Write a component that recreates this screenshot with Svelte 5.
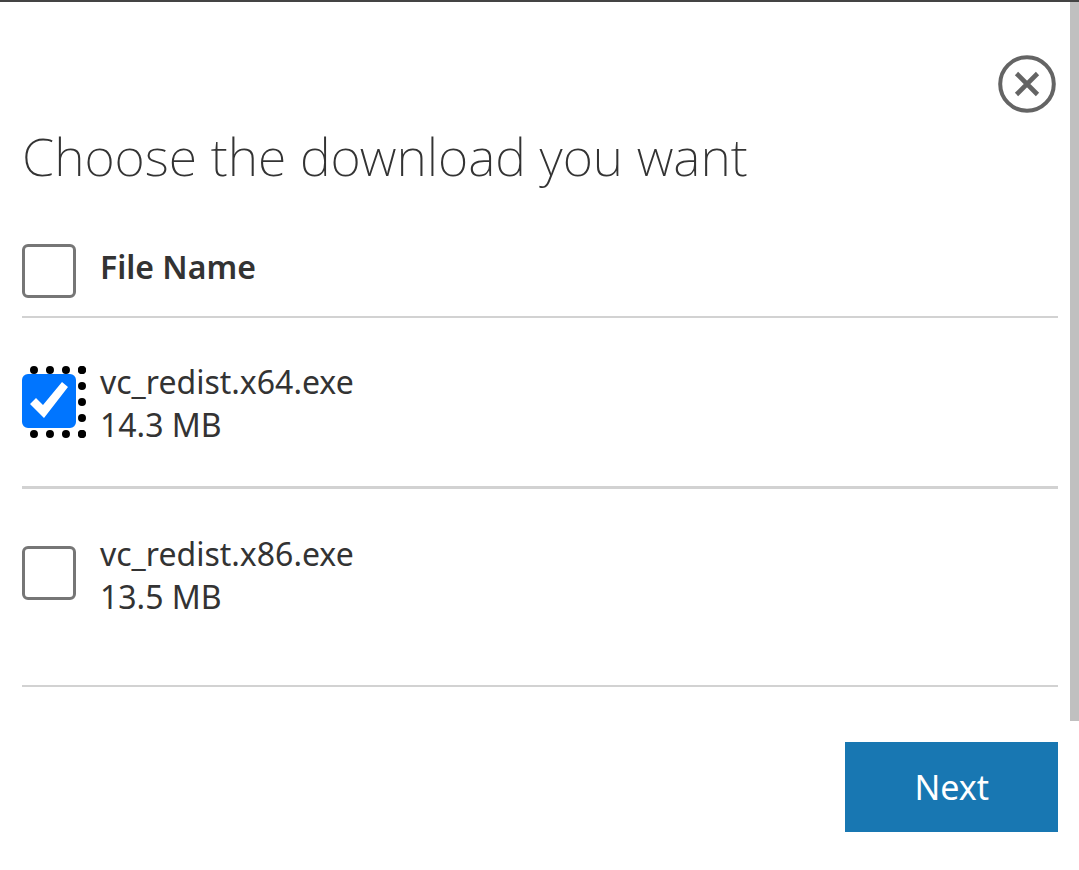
<script>
  let files = $state([
    { name: 'vc_redist.x64.exe', size: '14.3 MB', checked: true },
    { name: 'vc_redist.x86.exe', size: '13.5 MB', checked: false }
  ]);
  let focused = $state(0);
  let all = $derived(files.every((f) => f.checked));

  function toggleAll(e) {
    const checked = e.target.checked;
    files.forEach((f) => (f.checked = checked));
  }
</script>

<div class="dialog">
  <div class="scrollbar"></div>
  <div class="top">
    <button class="close" aria-label="Close">
      <svg viewBox="0 0 58 58" width="58" height="58" fill="none" stroke="#646464">
        <circle cx="29" cy="29" r="26.8" stroke-width="4" />
        <path d="M18.5 18.5 39.5 39.5M39.5 18.5 18.5 39.5" stroke-width="4.6" />
      </svg>
    </button>
  </div>
  <h1>Choose the download you want</h1>
  <table>
    <thead>
      <tr>
        <th class="pick">
          <span class="box"><input id="all" type="checkbox" checked={all} onchange={toggleAll} /></span>
        </th>
        <th class="name"><label for="all">File Name</label></th>
      </tr>
    </thead>
    <tbody>
      {#each files as file, i}
        <tr>
          <td class="pick">
            <span class="box" class:focused={focused === i}>
              <input id="file{i}" type="checkbox" bind:checked={file.checked} onfocus={() => (focused = i)} />
            </span>
          </td>
          <td>
            <label for="file{i}">{file.name}<br />{file.size}</label>
          </td>
        </tr>
      {/each}
    </tbody>
  </table>
  <div class="actions">
    <button class="next">Next</button>
  </div>
</div>

<style>
  :global(body) {
    margin: 0;
    background: #fff;
  }

  .dialog {
    position: relative;
    box-sizing: border-box;
    padding: 53px 21px 38px 22px;
    border-top: 2px solid #444;
    font-family: "Noto Sans", sans-serif;
    font-size: 32px;
    line-height: 43px;
    color: #333;
  }

  .scrollbar {
    position: absolute;
    top: 0;
    right: 0;
    width: 9px;
    height: 719px;
    background: #c0c0c0;
  }

  .top {
    display: flex;
    justify-content: flex-end;
    padding-right: 2px;
  }

  .close {
    display: block;
    padding: 0;
    border: 0;
    background: none;
    cursor: pointer;
  }

  .close svg {
    display: block;
  }

  h1 {
    margin: 7px 0 32px;
    font-size: 52px;
    font-weight: 200;
    line-height: 72px;
  }

  table {
    width: 100%;
    border-collapse: separate;
    border-spacing: 0;
  }

  th,
  td {
    padding: 42px 0 40px;
    border-bottom: 3px solid #d2d2d2;
    text-align: left;
    vertical-align: top;
  }

  th {
    padding: 20px 0 18px;
    border-bottom-width: 2px;
    font-weight: 600;
  }

  th.name {
    padding-top: 21px;
  }

  tbody tr:last-child td {
    padding-top: 43px;
    padding-bottom: 67px;
    border-bottom-width: 2px;
  }

  tbody .pick,
  tbody tr:last-child .pick {
    padding-top: 56px;
    padding-bottom: 0;
  }

  tbody tr:last-child .pick {
    padding-top: 57px;
  }

  .pick {
    width: 78px;
  }

  .box {
    display: block;
    width: 56px;
    height: 54px;
  }

  /* the dots run off the left edge of the dialog content */
  .focused {
    height: 56px;
    outline: 8px dotted #000;
    clip-path: inset(-8px -8px -8px 0);
  }

  input {
    display: block;
    appearance: none;
    box-sizing: border-box;
    width: 54px;
    height: 54px;
    margin: 0;
    border: 3px solid #767676;
    border-radius: 6px;
    background: #fff;
    outline: none;
  }

  input:checked {
    border-color: #0075ff;
    background: #0075ff;
  }

  input:checked::before {
    content: "";
    display: block;
    height: 48px;
    background: #fff;
    clip-path: polygon(5px 27px, 11px 21px, 18px 28px, 37px 5px, 43px 10px, 19px 41px);
  }

  .actions {
    display: flex;
    justify-content: flex-end;
    padding-top: 55px;
  }

  .next {
    padding: 24px 69px 23px;
    border: 0;
    background: #1877b2;
    color: #fff;
    font: inherit;
    font-size: 34px;
    cursor: pointer;
  }
</style>
